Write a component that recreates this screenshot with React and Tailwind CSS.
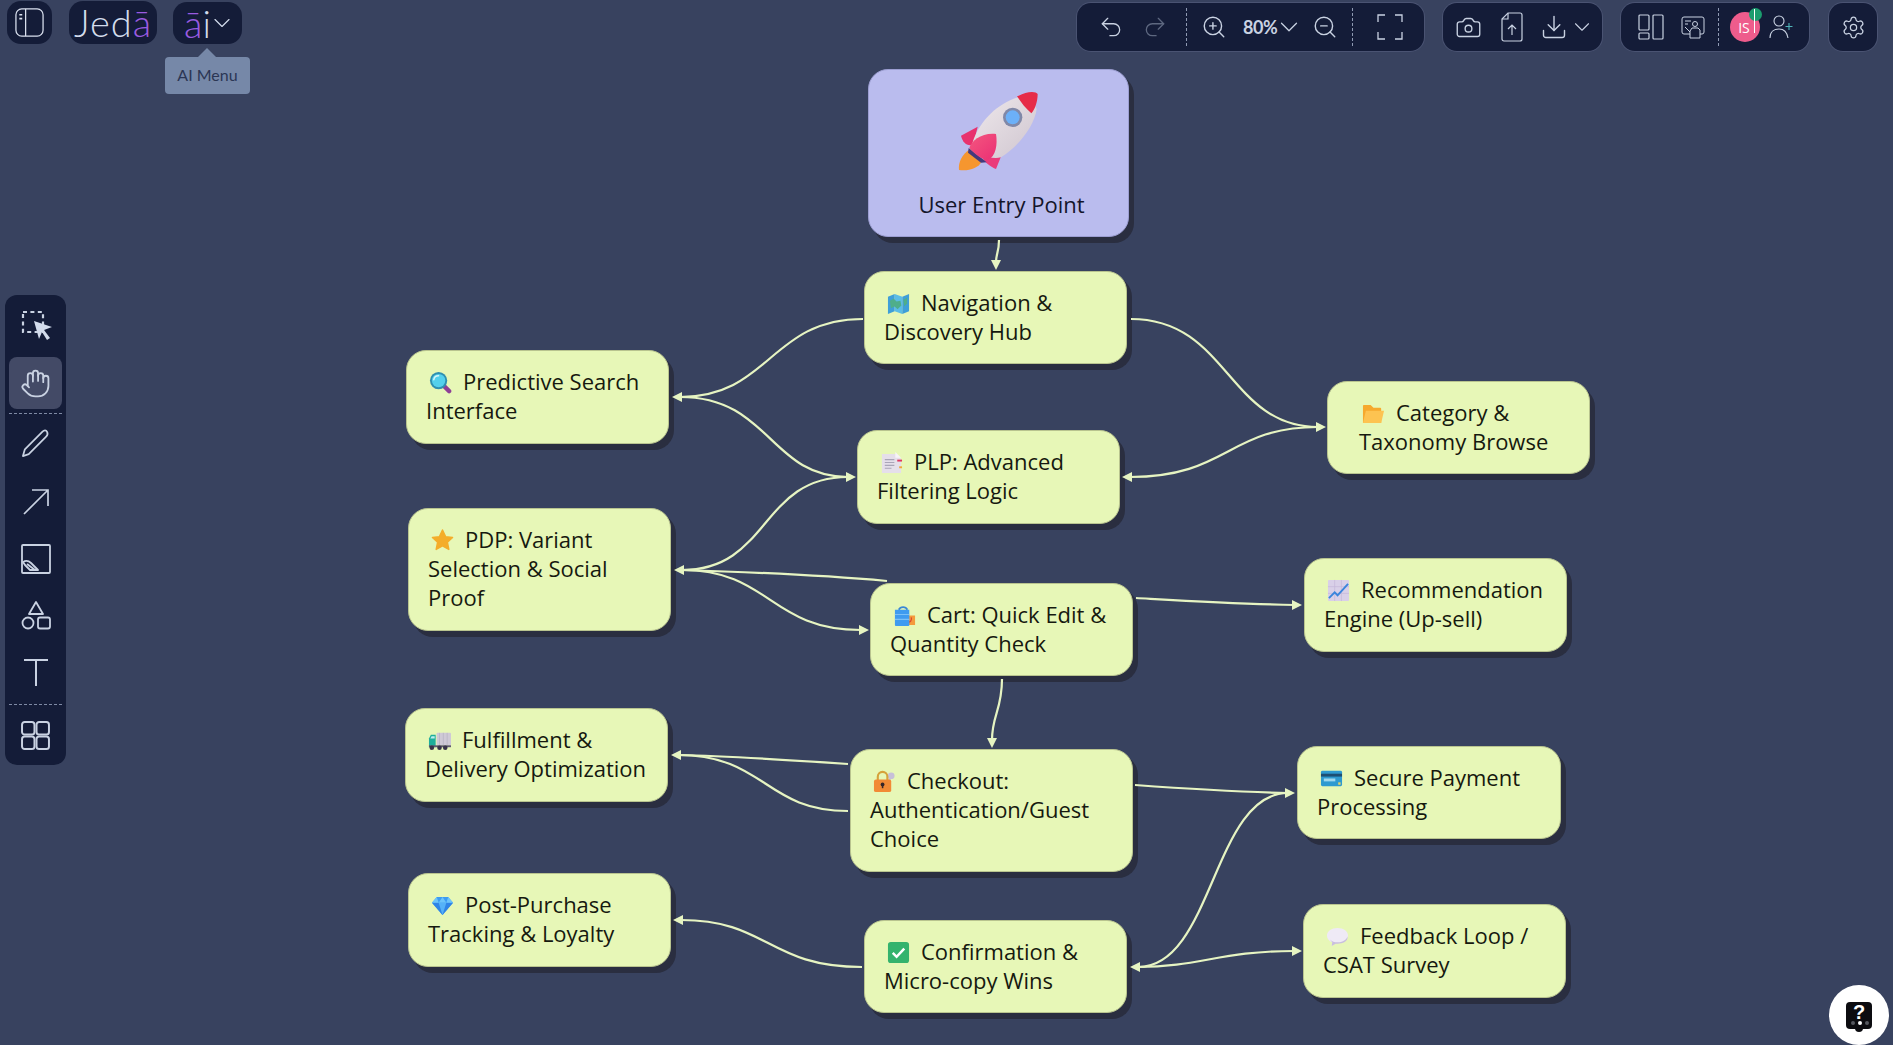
import { ChevronDown, Hand, Settings, Undo2, Redo2, ZoomIn, ZoomOut, Camera, Download } from "lucide-react";

const LINE = "#e6f4c2";
const EMOJI = "inline-block w-[23px] h-[23px] align-[-4px] ml-[3px] mr-[11px]";

const EDGES = [
  "M999 240 C999 252 996 254 996 262",
  "M863 319 C770 319 770 397 680 397",
  "M680 397 C770 397 770 477 848 477",
  "M1131 319 C1228 319 1228 427 1318 427",
  "M1318 427 C1228 427 1228 477 1130 477",
  "M848 477 C760 477 770 570 682 570",
  "M887 581 C820 575 750 572 682 570",
  "M682 570 C770 570 770 630 861 630",
  "M1136 598 C1190 601 1240 604 1295 605",
  "M1002 679 C1002 710 992 715 992 740",
  "M848 764 C790 760 730 756 678 755",
  "M848 811 C765 811 765 755 678 755",
  "M1135 785 C1190 789 1240 792 1288 793",
  "M1138 967 C1213 967 1213 793 1288 793",
  "M1138 967 C1200 967 1220 951 1294 951",
  "M862 967 C768 967 768 920 681 920",
];

// arrow heads, tip first
const HEADS = [
  "996,270 991,260 1001,260",
  "672,397 682,392 682,402",
  "856,477 846,472 846,482",
  "1326,427 1316,422 1316,432",
  "1122,477 1132,472 1132,482",
  "674,570 684,565 684,575",
  "869,630 859,625 859,635",
  "1302,605 1292,600 1292,610",
  "992,748 987,738 997,738",
  "671,755 681,750 681,760",
  "1295,793 1285,788 1285,798",
  "1130,967 1140,962 1140,972",
  "1302,951 1292,946 1292,956",
  "673,920 683,915 683,925",
];

function MapEmoji() {
  return (
    <svg viewBox="0 0 24 24" className={EMOJI}>
      <path d="M1 5l7-3v18l-7 3z" fill="#3f9fd8" />
      <path d="M8 2l8 3v18l-8-3z" fill="#5bbce6" />
      <path d="M16 5l7-3v18l-7 3z" fill="#3f9fd8" />
      <path d="M3 9l4-2 3 3 4-1 1 5-4 4-3-3-4 2z" fill="#4fae8a" />
      <path d="M17 8l4-2v6l-3 3z" fill="#4fae8a" />
    </svg>
  );
}

function SearchEmoji() {
  return (
    <svg viewBox="0 0 24 24" className={EMOJI}>
      <path d="M15 15l6 6" stroke="#8e3f96" strokeWidth="4.500" strokeLinecap="round" />
      <circle cx="10" cy="10" r="9" fill="#2f8fb0" />
      <circle cx="10" cy="10" r="7" fill="#54d0ec" />
      <path d="M5 9a5 5 0 0 1 5-4" stroke="#d8f6fb" strokeWidth="1.600" fill="none" strokeLinecap="round" />
    </svg>
  );
}

function FolderEmoji() {
  return (
    <svg viewBox="0 0 24 24" className={EMOJI}>
      <path d="M1 4a1 1 0 0 1 1-1h7l3 3h7a1 1 0 0 1 1 1v15H1z" fill="#f6a92d" />
      <path d="M1 22l3-13h19l-3 13z" fill="#fdc351" />
    </svg>
  );
}

function PageEmoji() {
  return (
    <svg viewBox="0 0 24 24" className={EMOJI}>
      <path d="M2 3h14l6 5v15H2z" fill="#e5dfea" />
      <path d="M16 1l6 6h-6z" fill="#f7f3f8" />
      <path d="M5 9h10M5 12h10M5 15h10M5 18h7" stroke="#a9a5b8" strokeWidth="1.200" />
      <path d="M18 10h5" stroke="#e0355f" strokeWidth="2" />
      <path d="M20 17h3" stroke="#f2a63a" strokeWidth="2" />
    </svg>
  );
}

function StarEmoji() {
  return (
    <svg viewBox="0 0 24 24" className={EMOJI}>
      <path d="M12 1l3.200 7 7.300.8-5.400 5 1.500 7.500L12 17.600l-6.600 3.700 1.500-7.500-5.400-5L8.800 8z" fill="#f4ad2a" stroke="#f4ad2a" strokeWidth="1.500" strokeLinejoin="round" />
    </svg>
  );
}

function BagEmoji() {
  return (
    <svg viewBox="0 0 24 24" className={EMOJI}>
      <path d="M13 12h10v10H11z" fill="#f49a3c" />
      <path d="M19 14c1 3-1 5-3 5" stroke="#d9422e" strokeWidth="1.200" fill="none" />
      <path d="M6 6a5 5 0 0 1 9 0" stroke="#3a87d6" strokeWidth="1.800" fill="none" />
      <path d="M2 6h15v16a1 1 0 0 1-1 1H3a1 1 0 0 1-1-1z" fill="#3f9bf0" />
      <path d="M2 11h15M2 16h15" stroke="#7cc0f7" strokeWidth="1.200" />
    </svg>
  );
}

function ChartEmoji() {
  return (
    <svg viewBox="0 0 24 24" className={EMOJI}>
      <rect x="1" y="1" width="22" height="22" rx="1" fill="#d9d0e8" />
      <path d="M1 8h22M1 15h22M8 1v22M15 1v22" stroke="#c4b6d8" strokeWidth="0.700" />
      <path d="M2 20l6-6 3 3 11-12" stroke="#3a85dc" strokeWidth="2" fill="none" />
    </svg>
  );
}

function TruckEmoji() {
  return (
    <svg viewBox="0 0 24 24" className={EMOJI}>
      <rect x="9" y="4" width="15" height="13" rx="1" fill="#cfc9d6" />
      <path d="M12 4v13M16 4v13M20 4v13" stroke="#b6afc0" strokeWidth="0.700" />
      <path d="M1 10l2-4h5v13H1z" fill="#1fae9b" />
      <path d="M2.500 10l1.200-2.500H7V10z" fill="#bfeef0" />
      <rect x="1" y="17" width="23" height="2" fill="#5f5a70" />
      <circle cx="4" cy="19.500" r="2.400" fill="#39344a" />
      <circle cx="12" cy="19.500" r="2.400" fill="#39344a" />
      <circle cx="18" cy="19.500" r="2.400" fill="#39344a" />
    </svg>
  );
}

function LockEmoji() {
  return (
    <svg viewBox="0 0 24 24" className={EMOJI}>
      <circle cx="19" cy="6" r="3.500" fill="#c7c0d8" />
      <path d="M18 8l-3 9" stroke="#c7c0d8" strokeWidth="2.200" />
      <path d="M5 11V7a5 5 0 0 1 10 0v4" stroke="#d6a23b" strokeWidth="2.200" fill="none" />
      <rect x="1" y="10" width="18" height="13" rx="2" fill="#f28a35" />
      <circle cx="10" cy="15" r="2" fill="#36262a" />
      <path d="M9.200 15h1.600v4H9.200z" fill="#36262a" />
    </svg>
  );
}

function CardEmoji() {
  return (
    <svg viewBox="0 0 24 24" className={EMOJI}>
      <rect x="1" y="4" width="22" height="16" rx="1.500" fill="#2e9ad0" />
      <rect x="1" y="7" width="22" height="3" fill="#1d4f73" />
      <rect x="4" y="12" width="12" height="3" fill="#9fd8ee" />
      <rect x="19" y="16" width="2.500" height="2.500" fill="#e7d565" />
    </svg>
  );
}

function GemEmoji() {
  return (
    <svg viewBox="0 0 24 24" className={EMOJI}>
      <path d="M6 3h12l5 6-11 13L1 9z" fill="#3d9cf2" />
      <path d="M1 9h22L12 22z" fill="#2f84e6" />
      <path d="M6 3l2 6 4-6 4 6 2-6 5 6H1z" fill="#6cc4fa" />
      <path d="M8 9h8l-4 13z" fill="#55b2f8" />
    </svg>
  );
}

function CheckEmoji() {
  return (
    <svg viewBox="0 0 24 24" className={EMOJI}>
      <rect x="1" y="1" width="22" height="22" rx="3" fill="#34b36d" />
      <path d="M6 12.500l4 4 8-8.500" stroke="#ffffff" strokeWidth="2.600" fill="none" />
    </svg>
  );
}

function SpeechEmoji() {
  return (
    <svg viewBox="0 0 24 24" className={EMOJI}>
      <path d="M12 3c6 0 11 3 11 8s-5 8-11 8h-2l-4 3 .5-4C3 17 1 14 1 11c0-5 5-8 11-8z" fill="#efeaf6" />
      <path d="M4 15c2 2 5 3 8 3 5 0 9-2 10.500-6 .5 5-5 7.500-10.500 7.500h-2l-4 2.500.5-4z" fill="#c9bfdd" />
    </svg>
  );
}

function Rocket() {
  return (
    <svg viewBox="320 85 255 255" className="w-[85px] h-[85px] shrink-0">
      <defs>
        <linearGradient id="rocketBody" x1="0" y1="0" x2="1" y2="1">
          <stop offset="0" stopColor="#efe9ec" />
          <stop offset="1" stopColor="#cfc5cf" />
        </linearGradient>
        <linearGradient id="rocketFin" x1="0" y1="0" x2="1" y2="1">
          <stop offset="0" stopColor="#f4577f" />
          <stop offset="1" stopColor="#ea2f74" />
        </linearGradient>
      </defs>
      <path d="M362 265C338 282 326 305 329 328C358 332 388 322 396 304Z" fill="#f6962f" />
      <path d="M385 198L335 225C340 245 352 258 372 252Z" fill="#e8326e" />
      <path d="M464 265L440 325C425 320 405 305 398 290Z" fill="#ea3b7a" />
      <path d="M540 103C470 110 395 165 370 245C385 275 420 300 455 290C510 255 555 195 562 145Z" fill="url(#rocketBody)" />
      <path d="M508 105C530 92 560 90 565 100C565 125 555 150 546 158C530 145 515 125 503 107Z" fill="#e62b48" />
      <circle cx="490" cy="170" r="29" fill="#8088a8" />
      <circle cx="490" cy="170" r="21" fill="#6cb0f8" />
      <path d="M358 262L412 305L395 306L356 276Z" fill="#443a7c" />
      <path d="M440 220C400 215 365 240 360 262C380 285 400 297 415 298C440 288 445 250 440 220Z" fill="url(#rocketFin)" />
    </svg>
  );
}

const NODES = [
  { pos: "left-[864px] top-[271px] w-[263px] h-[93px]", Emoji: MapEmoji, text: "Navigation & Discovery Hub" },
  { pos: "left-[406px] top-[350px] w-[263px] h-[94px]", Emoji: SearchEmoji, text: "Predictive Search Interface" },
  { pos: "left-[857px] top-[430px] w-[263px] h-[94px]", Emoji: PageEmoji, text: "PLP: Advanced Filtering Logic" },
  { pos: "left-[1327px] top-[381px] w-[263px] h-[93px]", Emoji: FolderEmoji, text: "Category & Taxonomy Browse", indent: "pl-[31px]" },
  { pos: "left-[408px] top-[508px] w-[263px] h-[123px]", Emoji: StarEmoji, text: "PDP: Variant Selection & Social Proof" },
  { pos: "left-[870px] top-[583px] w-[263px] h-[93px]", Emoji: BagEmoji, text: "Cart: Quick Edit & Quantity Check" },
  { pos: "left-[1304px] top-[558px] w-[263px] h-[94px]", Emoji: ChartEmoji, text: "Recommendation Engine (Up-sell)" },
  { pos: "left-[405px] top-[708px] w-[263px] h-[94px]", Emoji: TruckEmoji, text: "Fulfillment & Delivery Optimization", wrap: "pr-[5px]" },
  { pos: "left-[850px] top-[749px] w-[283px] h-[123px]", Emoji: LockEmoji, text: "Checkout: Authentication/Guest Choice", wrap: "pr-[40px]" },
  { pos: "left-[1297px] top-[746px] w-[264px] h-[93px]", Emoji: CardEmoji, text: "Secure Payment Processing" },
  { pos: "left-[408px] top-[873px] w-[263px] h-[94px]", Emoji: GemEmoji, text: "Post-Purchase Tracking & Loyalty" },
  { pos: "left-[864px] top-[920px] w-[263px] h-[93px]", Emoji: CheckEmoji, text: "Confirmation & Micro-copy Wins" },
  { pos: "left-[1303px] top-[904px] w-[263px] h-[94px]", Emoji: SpeechEmoji, text: "Feedback Loop / CSAT Survey" },
];

function Node({ pos, Emoji, text, indent = "pl-[19px]", wrap = "pr-[20px]" }) {
  return (
    <div className={`absolute ${pos} ${indent} ${wrap} pt-[16px] rounded-[20px] bg-[#e7f7b7] border border-[#b9c48f] shadow-[5px_6px_0_#2a2e40] text-[22px] leading-[29px] text-[#16190f]`}>
      <Emoji />
      {text}
    </div>
  );
}

function Divider() {
  return <div className="h-[38px] w-0 border-l border-dashed border-[#8f9ab3]" />;
}

function Panel({ className, children }) {
  return <div className={`h-[48px] rounded-[14px] bg-[#141c38] ring-1 ring-[#4a5372] flex items-center ${className}`}>{children}</div>;
}

function PanelToggleIcon() {
  return (
    <svg viewBox="0 0 32 32" className="w-[31px] h-[31px]" fill="none" stroke="#d9e0ee" strokeWidth="1.300">
      <rect x="2" y="2" width="28" height="28" rx="6" />
      <path d="M12 2v28" />
      <path d="M5.500 8h3M5.500 12h3" strokeWidth="1.800" />
    </svg>
  );
}

function CornersIcon() {
  return (
    <svg viewBox="0 0 26 26" className="w-[26px] h-[26px]" fill="none" stroke="#c9d2e2" strokeWidth="1.300">
      <path d="M8 1H1v7M18 1h7v7M8 25H1v-7M18 25h7v-7" />
    </svg>
  );
}

function FileUpIcon() {
  return (
    <svg viewBox="0 0 22 30" className="w-[22px] h-[30px]" fill="none" stroke="#c9d2e2" strokeWidth="1.200">
      <path d="M7 1h12a2 2 0 0 1 2 2v24a2 2 0 0 1-2 2H3a2 2 0 0 1-2-2V7z" />
      <path d="M7 1v6H1" />
      <path d="M11 23V13M7 17l4-4 4 4" />
    </svg>
  );
}

function LayoutIcon() {
  return (
    <svg viewBox="0 0 26 26" className="w-[26px] h-[26px]" fill="none" stroke="#c9d2e2" strokeWidth="1.200">
      <rect x="1" y="1" width="10" height="15" rx="1" />
      <rect x="1" y="19" width="10" height="6" rx="1" />
      <rect x="15" y="1" width="10" height="24" rx="1" />
    </svg>
  );
}

function PresenterIcon() {
  return (
    <svg viewBox="0 0 24 24" className="w-[24px] h-[24px]" fill="none" stroke="#c9d2e2" strokeWidth="1">
      <rect x="1" y="2" width="22" height="17" rx="2" />
      <path d="M4 6h6M4 9h3" />
      <circle cx="14" cy="9" r="2.500" fill="#141c38" />
      <path d="M9 23v-7l2-3h6l2 2v8H9z" fill="#141c38" />
      <path d="M4 12l5 5" />
    </svg>
  );
}

function InviteIcon() {
  return (
    <svg viewBox="0 0 26 26" className="w-[26px] h-[26px]" fill="none" stroke="#c9d2e2" strokeWidth="1.100">
      <circle cx="10" cy="7" r="5" />
      <path d="M1 24c0-6 4-9 9-9s8 3 9 9" />
      <path d="M20 9v7M16.500 12.500h7" stroke="#4fb3b8" />
    </svg>
  );
}

function SelectIcon() {
  return (
    <svg viewBox="0 0 32 32" className="w-[32px] h-[32px]" fill="none">
      <rect x="2" y="2" width="20" height="20" stroke="#c9d2e2" strokeWidth="2.200" strokeDasharray="4 3.400" />
      <path d="M13 11l18 6-8 3 6 8-3 2-5-8-3 7z" fill="#d3dcec" />
    </svg>
  );
}

function PencilIcon() {
  return (
    <svg viewBox="0 0 30 30" className="w-[29px] h-[29px]" fill="none" stroke="#c9d2e2" strokeWidth="1.800" strokeLinejoin="round">
      <path d="M2 28l2-7L22 3c2-2 4-2 5 0s1 3-1 5L8 26z" />
    </svg>
  );
}

function ImageToolIcon() {
  return (
    <svg viewBox="0 0 30 30" className="w-[30px] h-[30px]" fill="none" stroke="#c9d2e2" strokeWidth="1.800">
      <rect x="1" y="1" width="28" height="28" rx="1" />
      <path d="M2 18c3-2 6-1 8 1l7 7H9l-5-5z" strokeLinejoin="round" />
      <path d="M6 20l8 6" />
    </svg>
  );
}

function ShapesIcon() {
  return (
    <svg viewBox="0 0 30 30" className="w-[30px] h-[30px]" fill="none" stroke="#c9d2e2" strokeWidth="1.800">
      <path d="M15 1l7 12H8z" strokeLinejoin="round" />
      <circle cx="7" cy="22" r="5.500" />
      <rect x="17" y="16.500" width="12" height="11" rx="2" />
    </svg>
  );
}

function TextToolIcon() {
  return (
    <svg viewBox="0 0 26 30" className="w-[26px] h-[30px]" fill="none" stroke="#c9d2e2" strokeWidth="2">
      <path d="M1 3h24M13 3v26" />
    </svg>
  );
}

function ArrowToolIcon() {
  return (
    <svg viewBox="0 0 26 26" className="w-[26px] h-[26px]" fill="none" stroke="#c9d2e2" strokeWidth="1.700">
      <path d="M1 25L25 1M9 1h16v16" />
    </svg>
  );
}

function GridIcon() {
  return (
    <svg viewBox="0 0 28 28" className="w-[29px] h-[29px]" fill="none" stroke="#c9d2e2" strokeWidth="1.900">
      <rect x="1" y="1" width="12" height="12" rx="2.500" />
      <rect x="15" y="1" width="12" height="12" rx="2.500" />
      <rect x="1" y="15" width="12" height="12" rx="2.500" />
      <rect x="15" y="15" width="12" height="12" rx="2.500" />
    </svg>
  );
}

function TopBar() {
  return (
    <div className="relative flex items-start h-[51px] pt-[3px] font-['Lato',sans-serif]">
      <div className="ml-[7px] w-[45px] h-[43px] -mt-[2px] rounded-[14px] bg-[#141c38] flex items-center justify-center">
        <PanelToggleIcon />
      </div>
      <div className="ml-[17px] w-[88px] h-[43px] -mt-[2px] rounded-[14px] bg-[#141c38] flex items-center justify-center text-[38px] leading-[43px] font-light tracking-[1px] text-[#d3dcec]">
        Jed<span className="text-[#9a5be0]">ā</span>
      </div>
      <div className="ml-[16px] w-[69px] h-[42px] -mt-[1px] rounded-[14px] bg-[#141c38] flex items-center justify-center text-[#d3dcec] text-[38px] leading-[42px] font-light">
        <span className="text-[#9a5be0]">ā</span>i
        <ChevronDown className="w-[28px] h-[28px] -ml-[3px] -mr-[5px]" strokeWidth={1} />
      </div>

      <Panel className="ml-[835px] w-[347px]">
        <div className="w-[49px] flex justify-end pr-[2px]"><Undo2 className="w-[26px] h-[26px] text-[#c9d2e2]" strokeWidth={1.2} /></div>
        <div className="w-[45px] flex justify-end pr-[3px]"><Redo2 className="w-[26px] h-[26px] text-[#5e6880]" strokeWidth={1.2} /></div>
        <div className="ml-[15px]"><Divider /></div>
        <ZoomIn className="ml-[14px] w-[26px] h-[26px] text-[#c9d2e2]" strokeWidth={1.3} />
        <span className="ml-[16px] w-[36px] text-[18px] font-bold text-[#c9d2e2] tracking-[-0.5px]">80%</span>
        <ChevronDown className="-ml-[5px] -mr-[6px] w-[30px] h-[30px] text-[#c9d2e2]" strokeWidth={1} />
        <ZoomOut className="ml-[14px] w-[26px] h-[26px] text-[#c9d2e2]" strokeWidth={1.3} />
        <div className="ml-[14px]"><Divider /></div>
        <div className="ml-[24px]"><CornersIcon /></div>
      </Panel>

      <Panel className="ml-[19px] w-[159px]">
        <Camera className="ml-[12px] w-[27px] h-[27px] text-[#c9d2e2]" strokeWidth={1.2} />
        <div className="ml-[19px]"><FileUpIcon /></div>
        <Download className="ml-[17px] w-[28px] h-[28px] text-[#c9d2e2]" strokeWidth={1.2} />
        <ChevronDown className="ml-[1px] w-[26px] h-[26px] text-[#c9d2e2]" strokeWidth={1} />
      </Panel>

      <Panel className="ml-[19px] w-[188px] relative">
        <div className="ml-[17px]"><LayoutIcon /></div>
        <div className="ml-[17px]"><PresenterIcon /></div>
        <div className="ml-[13px]"><Divider /></div>
        <div className="relative ml-[11px] w-[30px] h-[30px] rounded-full bg-[#ee5c8c] flex items-center justify-center text-[14px] font-['Open_Sans',sans-serif] text-white pr-[2px]">
          IS
          <div className="absolute left-[19px] -top-[4px] w-[13px] h-[13px] rounded-full bg-[#1b9d6e]" />
          <div className="absolute left-[24px] top-[-3px] w-[1px] h-[24px] bg-white" />
        </div>
        <div className="ml-[9px]"><InviteIcon /></div>
      </Panel>

      <Panel className="ml-[20px] w-[48px] justify-center">
        <Settings className="w-[25px] h-[25px] text-[#c9d2e2]" strokeWidth={1.2} />
      </Panel>

      <div className="absolute left-[165px] top-[57px] w-[85px] h-[37px] pb-[2px] rounded-[4px] bg-[#7688a8] flex items-center justify-center text-[16px] text-[#2b3654]">
        AI Menu
        <div className="absolute left-[33px] -top-[9px] w-0 h-0 border-x-[9px] border-x-transparent border-b-[9px] border-b-[#7688a8]" />
      </div>
    </div>
  );
}

function SideBar() {
  return (
    <div className="absolute left-[5px] top-[295px] w-[61px] h-[470px] rounded-[12px] bg-[#141c38] flex flex-col items-center">
      <div className="h-[56px] flex items-center justify-center pt-[6px] pl-[2px]"><SelectIcon /></div>
      <div className="w-[53px] h-[52px] mt-[6px] rounded-[8px] bg-[#434a66] flex items-center justify-center">
        <Hand className="w-[31px] h-[31px] text-[#c9d2e2]" strokeWidth={1.4} />
      </div>
      <div className="w-[53px] mt-[4px] border-t border-dashed border-[#7f8aa5]" />
      <div className="h-[59px] flex items-center"><PencilIcon /></div>
      <div className="h-[57px] flex items-center"><ArrowToolIcon /></div>
      <div className="h-[58px] flex items-center"><ImageToolIcon /></div>
      <div className="h-[56px] flex items-center"><ShapesIcon /></div>
      <div className="h-[56px] flex items-center"><TextToolIcon /></div>
      <div className="w-[53px] mt-[4px] border-t border-dashed border-[#7f8aa5]" />
      <div className="h-[60px] flex items-center"><GridIcon /></div>
    </div>
  );
}

export default function App() {
  return (
    <div className="relative w-[1893px] h-[1045px] overflow-hidden bg-[#38425f] font-['Open_Sans',sans-serif]">
      <TopBar />
      <SideBar />

      <div className="absolute left-[868px] top-[69px] w-[261px] h-[168px] pt-[19px] rounded-[20px] bg-[#babcee] border border-[#9c9ed2] shadow-[5px_6px_0_#2a2e40] flex flex-col items-center text-[22px] leading-[29px] text-[#14152b]">
        <Rocket />
        <span className="mt-[16px] ml-[6px]">User Entry Point</span>
      </div>

      {NODES.map((n) => (
        <Node key={n.text} {...n} />
      ))}

      {/* edges sit over the nodes' shadows */}
      <svg className="absolute left-0 top-0 w-[1893px] h-[1045px] pointer-events-none" viewBox="0 0 1893 1045" fill="none">
        {EDGES.map((d) => (
          <path key={d} d={d} stroke={LINE} strokeWidth="2.200" />
        ))}
        {HEADS.map((p) => (
          <polygon key={p} points={p} fill={LINE} />
        ))}
      </svg>

      <div className="absolute left-[1829px] top-[985px] w-[60px] h-[60px] rounded-full bg-white flex items-center justify-center">
        <div className="relative w-[26px] h-[27px] rounded-[4px] bg-[#0c0c10] flex justify-center text-[20px] leading-[20px] font-bold text-white font-['Liberation_Sans',sans-serif]">
          ?
          <div className="absolute left-[5px] bottom-[4px] flex gap-[3px]">
            <div className="w-[4px] h-[4px] rounded-full bg-[#55585f]" />
            <div className="w-[4px] h-[4px] rounded-full bg-white" />
            <div className="w-[4px] h-[4px] rounded-full bg-[#55585f]" />
          </div>
          <div className="absolute left-[9px] -bottom-[3px] w-[8px] h-[4px] bg-[#0c0c10] rounded-b-[4px]" />
        </div>
      </div>
    </div>
  );
}
